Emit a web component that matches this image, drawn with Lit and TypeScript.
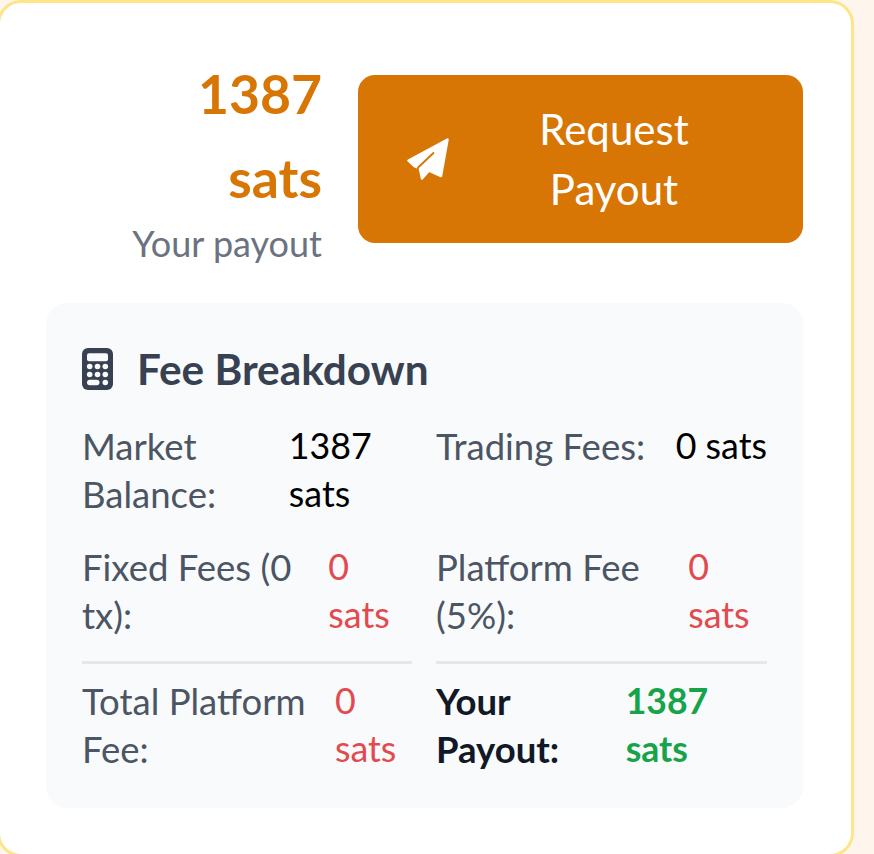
import { LitElement, html, css } from 'lit';
import { customElement } from 'lit/decorators.js';

@customElement('app-root')
export class AppRoot extends LitElement {
  static styles = css`
    :host {
      display: block;
      height: 854px;
      overflow: hidden;
      background: #fef6ec;
      font-family: 'Lato', 'Liberation Sans', sans-serif;
    }

    .card {
      box-sizing: border-box;
      width: 857px;
      height: 857px;
      margin-left: -3px;
      padding: 48px 48px 0 46px;
      background: #fff;
      border: 3px solid #fde68a;
      border-radius: 24px;
    }

    .top {
      display: flex;
      justify-content: flex-end;
      align-items: center;
      gap: 36px;
      margin-bottom: 35px;
    }

    .amount-col {
      width: 200px;
      text-align: right;
    }

    .amount {
      font-size: 53.5px;
      line-height: 84px;
      font-weight: 700;
      color: #d77605;
    }

    .amount-label {
      font-size: 36px;
      line-height: 49px;
      color: #6b7280;
    }

    .payout-btn {
      box-sizing: border-box;
      width: 445px;
      height: 168px;
      margin-top: -2px;
      display: flex;
      align-items: center;
      padding: 0 0 0 47px;
      background: #d77605;
      border-radius: 17px;
      color: #fff;
      font-size: 42px;
      line-height: 60px;
    }

    .payout-btn svg {
      width: 46px;
      height: 46px;
      flex: none;
    }

    .payout-btn span {
      width: 250px;
      margin-left: 38px;
      text-align: center;
    }

    .panel {
      box-sizing: border-box;
      height: 505px;
      padding: 36px 36px 0 36px;
      background: #f9fafb;
      border-radius: 21px;
    }

    .panel h3 {
      display: flex;
      align-items: center;
      gap: 24px;
      margin: 0 0 23px;
      font-size: 42.3px;
      line-height: 60px;
      font-weight: 700;
      color: #374151;
    }

    .panel h3 svg {
      width: 31px;
      height: 42px;
      flex: none;
    }

    .grid {
      display: grid;
      grid-template-columns: 330px 331px;
      gap: 25px 24px;
      font-size: 36.5px;
      line-height: 48px;
    }

    .cell {
      display: flex;
      justify-content: space-between;
      color: #4b5563;
    }

    .cell.total {
      padding-top: 13px;
      border-top: 3px solid #e5e7eb;
      margin-top: -3px;
    }

    .value { color: #000; font-size: 35.8px; }
    .value.fee { color: #e24a4f; }
    .strong { font-weight: 700; color: #111827; }
    .value.good { font-weight: 700; color: #16a34a; font-size: 35.6px; }
  `;

  render() {
    return html`
      <div class="card">
        <div class="top">
          <div class="amount-col">
            <div class="amount">1387 sats</div>
            <div class="amount-label">Your payout</div>
          </div>
          <div class="payout-btn">
            <svg viewBox="0 0 46 46">
              <path
                d="M42.5 3.5 L3.5 24.5 L10 30.5 L15 33 L17 42.5 L24 34.5 L36 40 Z"
                fill="#fff"
                stroke="#fff"
                stroke-width="2.5"
                stroke-linejoin="round"
              ></path>
              <path d="M29 16.5 L13.5 31 L11 36" fill="none" stroke="#d77605" stroke-width="2"></path>
            </svg>
            <span>Request Payout</span>
          </div>
        </div>

        <div class="panel">
          <h3>
            <svg viewBox="0 0 31 42">
              <rect width="31" height="42" rx="6" fill="#374151"></rect>
              <rect x="5" y="5.3" width="21" height="8" rx="2" fill="#f9fafb"></rect>
              <circle cx="7.7" cy="18.5" r="2.8" fill="#f9fafb"></circle>
              <circle cx="15.5" cy="18.5" r="2.8" fill="#f9fafb"></circle>
              <circle cx="23.3" cy="18.5" r="2.8" fill="#f9fafb"></circle>
              <circle cx="7.7" cy="26.5" r="2.8" fill="#f9fafb"></circle>
              <circle cx="15.5" cy="26.5" r="2.8" fill="#f9fafb"></circle>
              <circle cx="23.3" cy="26.5" r="2.8" fill="#f9fafb"></circle>
              <rect x="5" y="31.7" width="12.5" height="5.6" rx="2.8" fill="#f9fafb"></rect>
              <circle cx="23.3" cy="34.5" r="2.8" fill="#f9fafb"></circle>
            </svg>
            Fee Breakdown
          </h3>
          <div class="grid">
            <div class="cell"><span>Market Balance:</span><span class="value">1387 sats</span></div>
            <div class="cell"><span>Trading Fees:</span><span class="value">0 sats</span></div>
            <div class="cell"><span>Fixed Fees (0 tx):</span><span class="value fee">0 sats</span></div>
            <div class="cell"><span>Platform Fee (5%):</span><span class="value fee">0 sats</span></div>
            <div class="cell total"><span>Total Platform Fee:</span><span class="value fee">0 sats</span></div>
            <div class="cell total"><span class="strong">Your Payout:</span><span class="value good">1387 sats</span></div>
          </div>
        </div>
      </div>
    `;
  }
}
